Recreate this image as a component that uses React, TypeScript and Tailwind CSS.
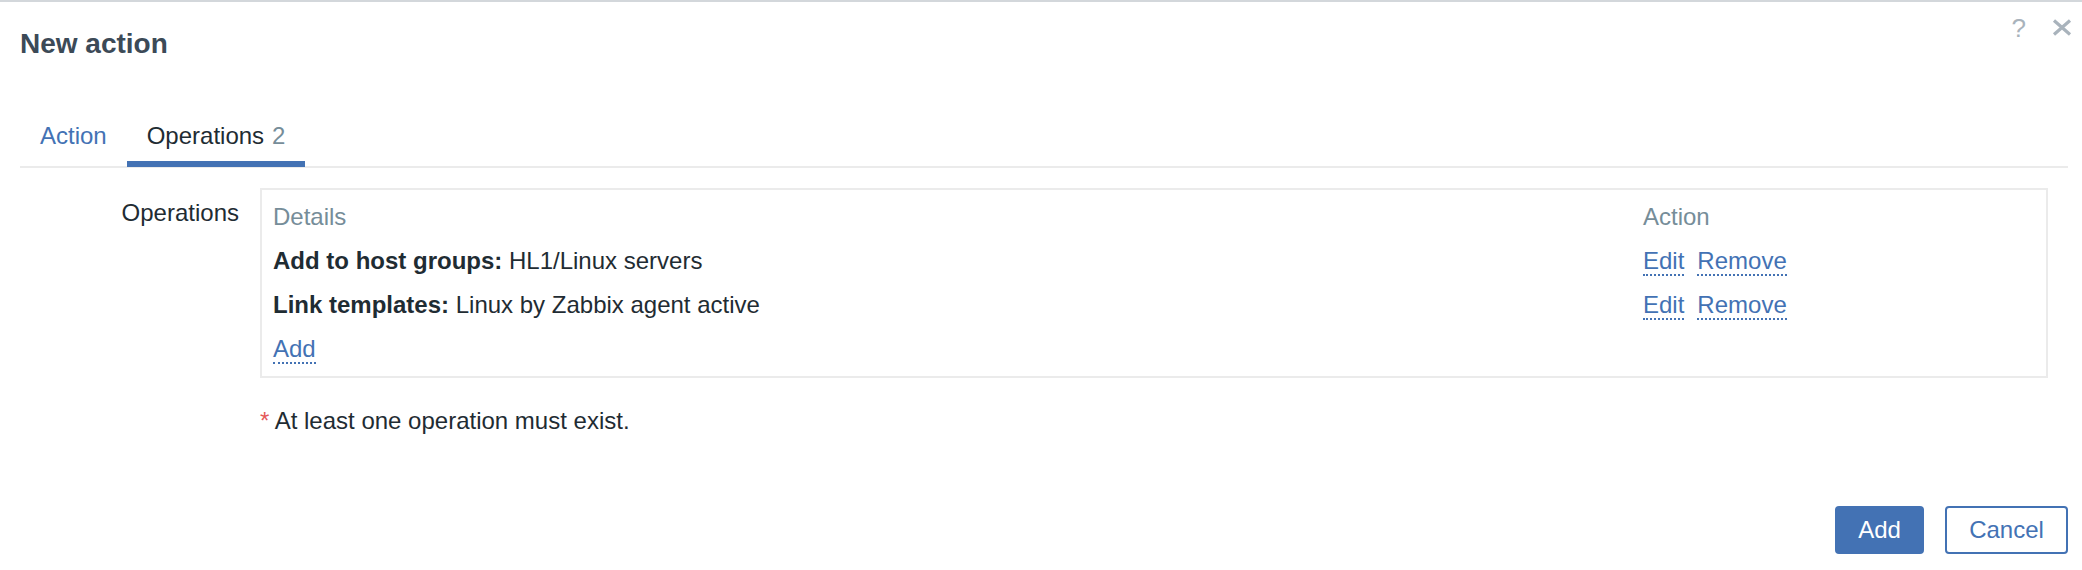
import React from 'react'

const font = { fontFamily: '"Liberation Sans", Arial, sans-serif' }

const ActionLink: React.FC<{ children: React.ReactNode; className?: string }> = ({ children, className }) => (
    <a href="#" className={`text-[#4372b4] border-b-2 border-dotted border-[#4372b4] ${className ?? ''}`}>
        {children}
    </a>
)

const App: React.FC = () => {
    const operations = [
        { label: 'Add to host groups:', value: 'HL1/Linux servers' },
        { label: 'Link templates:', value: 'Linux by Zabbix agent active' }
    ]

    return (
        <div className="min-h-[570px] bg-white border-t-2 border-[#d3d7db] text-[24px] text-[#1f2c33]" style={font}>
            <div className="flex items-start pl-[20px] pr-[10px]">
                <h4 className="mt-[26px] text-[28px] leading-[32px] font-bold text-[#3c4a57]">New action</h4>
                <div className="ml-auto flex items-start">
                    <span className="mt-[13px] text-[26px] leading-[26px] text-[#a9b3bc]">?</span>
                    <svg className="mt-[17px] ml-[26px]" width="20" height="17" viewBox="0 0 20 17">
                        <path d="M2 1.5 L18 15.5 M18 1.5 L2 15.5" stroke="#a9b3bc" strokeWidth="3.2" fill="none" />
                    </svg>
                </div>
            </div>

            <div className="pl-[20px] pr-[14px]">
                <ul className="mt-[51px] flex border-b-2 border-[#ebebeb]">
                    <li className="-mb-px px-5 pt-[11px] pb-[11px] leading-[28px] border-b-[6px] border-transparent text-[#4372b4]">
                        Action
                    </li>
                    <li className="-mb-px px-5 pt-[11px] pb-[11px] leading-[28px] border-b-[6px] border-[#4372b4]">
                        Operations<span className="ml-2 text-[#768d99]">2</span>
                    </li>
                </ul>

                <div className="mt-[20px] flex items-start">
                    <label className="w-[219px] pt-[11px] text-right leading-[28px]">Operations</label>
                    <div className="ml-[21px] mr-[20px] flex-1 border-2 border-[#ebebeb] py-[5px]">
                        <table className="w-full border-collapse">
                            <colgroup>
                                <col />
                                <col className="w-[414px]" />
                            </colgroup>
                            <thead>
                                <tr className="text-[#768d99]">
                                    <th className="h-[44px] px-[11px] py-0 text-left align-middle font-normal leading-[28px]">Details</th>
                                    <th className="h-[44px] px-[11px] py-0 text-left align-middle font-normal leading-[28px]">Action</th>
                                </tr>
                            </thead>
                            <tbody>
                                {operations.map((op, i) => (
                                    <tr key={i}>
                                        <td className="h-[44px] px-[11px] py-0 align-middle leading-[28px]">
                                            <span className="font-bold">{op.label}</span> {op.value}
                                        </td>
                                        <td className="h-[44px] px-[11px] py-0 align-middle leading-[28px] whitespace-nowrap">
                                            <ActionLink className="mr-[13px]">Edit</ActionLink>
                                            <ActionLink>Remove</ActionLink>
                                        </td>
                                    </tr>
                                ))}
                                <tr>
                                    <td className="h-[44px] px-[11px] py-0 align-middle leading-[28px]" colSpan={2}>
                                        <ActionLink>Add</ActionLink>
                                    </td>
                                </tr>
                            </tbody>
                        </table>
                    </div>
                </div>

                <p className="mt-[29px] ml-[240px] leading-[28px]">
                    <span className="text-[#e45959]">*</span> At least one operation must exist.
                </p>

                <div className="mt-[71px] flex justify-end gap-[21px]">
                    <button className="h-[48px] w-[89px] rounded-[4px] bg-[#4372b4] text-white leading-[28px]">Add</button>
                    <button className="h-[48px] w-[123px] rounded-[4px] border-2 border-[#4372b4] bg-white text-[#4372b4] leading-[28px]">
                        Cancel
                    </button>
                </div>
            </div>
        </div>
    )
}

export default App
